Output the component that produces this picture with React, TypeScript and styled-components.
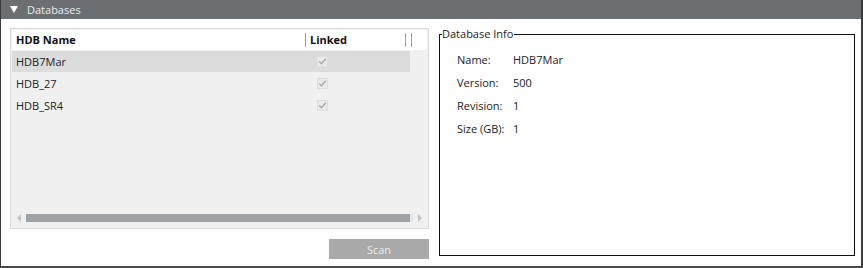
import styled, { createGlobalStyle } from "styled-components";

const Global = createGlobalStyle`
  html, body { margin: 0; padding: 0; background: #ffffff; }
  body { font-family: "Open Sans", "Noto Sans", sans-serif; }
`;

const Panel = styled.div`
  width: 863px;
  height: 268px;
  box-sizing: border-box;
  border-left: 1px solid #3a3a3a;
  border-right: 2px solid #3a3a3a;
  border-bottom: 2px solid #4a4a4a;
  display: flex;
  flex-direction: column;
`;

const Header = styled.div`
  height: 19px;
  background: #6c6f72;
  display: flex;
  align-items: center;
  gap: 9px;
  padding-left: 9px;
  color: #e6edf3;
  font-size: 11px;
`;

const Arrow = styled.span`
  width: 0;
  height: 0;
  border-left: 4px solid transparent;
  border-right: 4px solid transparent;
  border-top: 7px solid #ffffff;
`;

const Body = styled.div`
  flex: 1;
  display: flex;
  gap: 10px;
  padding: 9px 0 0 9px;
`;

const LeftCol = styled.div`
  flex: none;
  width: 419px;
  display: flex;
  flex-direction: column;
  align-items: flex-end;
  gap: 10px;
`;

const Grid = styled.div`
  width: 419px;
  height: 201px;
  box-sizing: border-box;
  border: 1px solid #dadada;
  background: #f0f0f0;
  display: flex;
  flex-direction: column;
  padding: 1px;
`;

const HeadRow = styled.div`
  height: 20px;
  background: #ffffff;
  display: flex;
  align-items: center;
  font-size: 11px;
  font-weight: 700;
  color: #111;
`;

const HeadCell = styled.div<{ $w: number }>`
  width: ${(p) => p.$w}px;
  box-sizing: border-box;
  padding-left: 4px;
  height: 14px;
  line-height: 14px;
  border-right: 1px solid #a0a0a0;
`;

const Row = styled.div<{ $sel?: boolean }>`
  width: 398px;
  height: 21px;
  margin-top: 1px;
  display: flex;
  align-items: center;
  background: ${(p) => (p.$sel ? "#dcdcdc" : "transparent")};
  font-size: 11px;
  color: #222;
`;

const NameCell = styled.div`
  width: 304px;
  padding-left: 4px;
  box-sizing: border-box;
`;

const Check = styled.div`
  width: 11px;
  height: 11px;
  margin-left: 1px;
  box-sizing: border-box;
  border: 1px solid #dedede;
  background: #eaeaea;
  display: flex;
  align-items: center;
  justify-content: center;
`;

const Spacer = styled.div`
  flex: 1;
`;

const ScrollBar = styled.div`
  height: 9px;
  margin-bottom: 5px;
  display: flex;
  align-items: center;
  padding: 0 5px;
  gap: 5px;
`;

const ScrollArrow = styled.span<{ $dir: "l" | "r" }>`
  width: 0;
  height: 0;
  border-top: 4px solid transparent;
  border-bottom: 4px solid transparent;
  ${(p) =>
    p.$dir === "l"
      ? "border-right: 4px solid #c4c4c4;"
      : "border-left: 4px solid #c4c4c4;"}
`;

const Track = styled.div`
  flex: 1;
  height: 8px;
  background: #e4e8ea;
  display: flex;
  padding-right: 3px;
`;

const Thumb = styled.div`
  flex: 1;
  background: #9fa3a5;
`;

const ScanButton = styled.button`
  width: 100px;
  height: 20px;
  border: none;
  background: #a9a9a9;
  color: #e9e9e9;
  font-family: "Open Sans", "Noto Sans", sans-serif;
  font-size: 11px;
  padding: 0;
`;

const Group = styled.div`
  flex: none;
  margin-top: 6px;
  width: 416px;
  height: 222px;
  box-sizing: border-box;
  border: 1px solid #111;
  padding: 17px 0 0 17px;
  position: relative;
`;

const Legend = styled.span`
  position: absolute;
  top: -8px;
  left: 2px;
  background: #fff;
  padding: 0 1px 0 0;
  font-size: 11px;
  color: #222;
  line-height: 14px;
`;

const InfoGrid = styled.div`
  display: grid;
  grid-template-columns: 56px auto;
  row-gap: 7px;
  font-size: 11px;
  color: #222;
  line-height: 16px;
`;

function CheckMark() {
  return (
    <svg width="9" height="9" viewBox="0 0 9 9">
      <path
        d="M1.3 4.6 L3.5 6.8 L7.8 1.8"
        fill="none"
        stroke="#a8a8a8"
        strokeWidth="1.4"
      />
    </svg>
  );
}

const rows = ["HDB7Mar", "HDB_27", "HDB_SR4"];
const info: [string, string][] = [
  ["Name:", "HDB7Mar"],
  ["Version:", "500"],
  ["Revision:", "1"],
  ["Size (GB):", "1"],
];

export default function App() {
  return (
    <>
      <Global />
      <Panel>
        <Header>
          <Arrow />
          <span>Databases</span>
        </Header>
        <Body>
          <LeftCol>
            <Grid>
              <HeadRow>
                <HeadCell $w={294}>HDB Name</HeadCell>
                <HeadCell $w={100}>Linked</HeadCell>
                <HeadCell $w={6} />
              </HeadRow>
              {rows.map((r, i) => (
                <Row key={r} $sel={i === 0}>
                  <NameCell>{r}</NameCell>
                  <Check>
                    <CheckMark />
                  </Check>
                </Row>
              ))}
              <Spacer />
              <ScrollBar>
                <ScrollArrow $dir="l" />
                <Track>
                  <Thumb />
                </Track>
                <ScrollArrow $dir="r" />
              </ScrollBar>
            </Grid>
            <ScanButton>Scan</ScanButton>
          </LeftCol>
          <Group>
            <Legend>Database Info</Legend>
            <InfoGrid>
              {info.map(([k, v]) => [
                <span key={k}>{k}</span>,
                <span key={k + "v"}>{v}</span>,
              ])}
            </InfoGrid>
          </Group>
        </Body>
      </Panel>
    </>
  );
}
